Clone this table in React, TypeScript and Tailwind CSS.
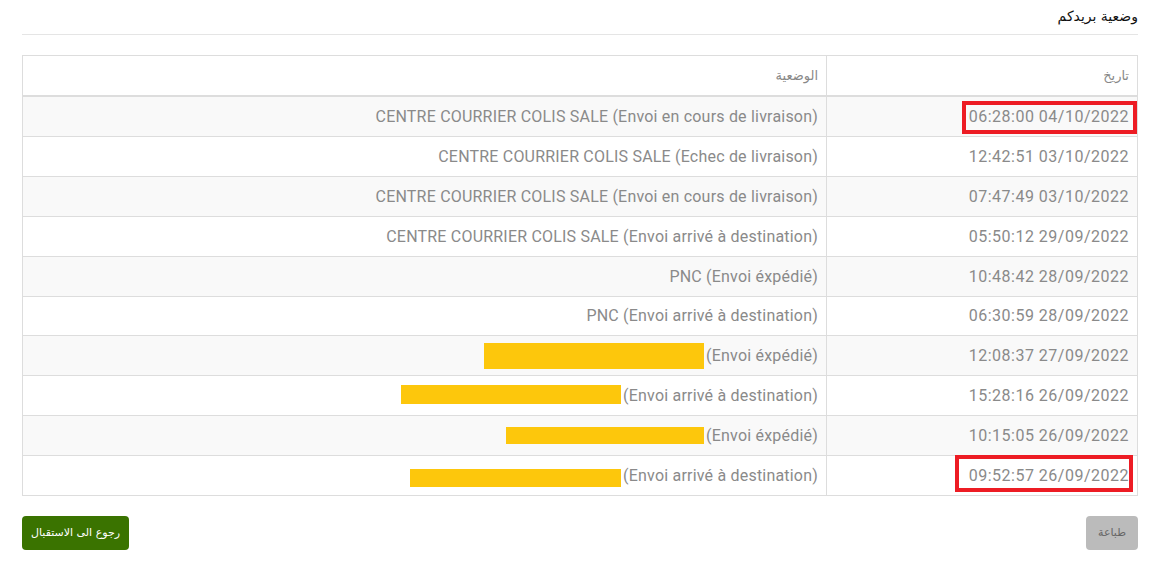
import React from "react";

type Row = {
  time: string;
  date: string;
  status: string;
  h?: number;
  bar?: { w: number; h: number; dy: number };
  mark?: { left: number; top: number; w: number; h: number };
};

const rows: Row[] = [
  { time: "06:28:00", date: "04/10/2022", status: "CENTRE COURRIER COLIS SALE (Envoi en cours de livraison)", mark: { left: 135, top: 4, w: 175, h: 33 } },
  { time: "12:42:51", date: "03/10/2022", status: "CENTRE COURRIER COLIS SALE (Echec de livraison)" },
  { time: "07:47:49", date: "03/10/2022", status: "CENTRE COURRIER COLIS SALE (Envoi en cours de livraison)" },
  { time: "05:50:12", date: "29/09/2022", status: "CENTRE COURRIER COLIS SALE (Envoi arrivé à destination)" },
  { time: "10:48:42", date: "28/09/2022", status: "PNC (Envoi éxpédié)" },
  { time: "06:30:59", date: "28/09/2022", status: "PNC (Envoi arrivé à destination)", h: 39 },
  { time: "12:08:37", date: "27/09/2022", status: "(Envoi éxpédié)", bar: { w: 220, h: 26, dy: 0 } },
  { time: "15:28:16", date: "26/09/2022", status: "(Envoi arrivé à destination)", bar: { w: 220, h: 19, dy: -1 } },
  { time: "10:15:05", date: "26/09/2022", status: "(Envoi éxpédié)", bar: { w: 198, h: 17, dy: 0 } },
  { time: "09:52:57", date: "26/09/2022", status: "(Envoi arrivé à destination)", h: 39, bar: { w: 211, h: 18, dy: 2 }, mark: { left: 128, top: -1, w: 178, h: 37 } },
];

const App = () => {
  return (
    <div className="min-h-[571px] bg-white pl-[22px] pr-[25px] font-['Roboto','Liberation_Sans','DejaVu_Sans',sans-serif]">
      <div className="flex h-[35px] justify-end border-b border-[#e5e5e5] pt-[5px]">
        <h2 className="text-[14px] leading-[22px] text-[#111] font-['DejaVu_Sans',sans-serif] font-normal" dir="rtl">
          وضعية بريدكم
        </h2>
      </div>

      <div className="mt-[20px] border border-[#ddd]">
        <div className="flex h-[41px] border-b-2 border-[#ddd] text-[13px] text-[#888] font-['DejaVu_Sans',sans-serif]">
          <div className="flex w-[804px] items-center justify-end border-r border-[#ddd] pr-[8px]">
            <span dir="rtl">الوضعية</span>
          </div>
          <div className="flex flex-1 items-center justify-end pr-[8px]">
            <span dir="rtl">تاريخ</span>
          </div>
        </div>
        {rows.map((r, i) => (
          <div
            key={i}
            className={
              "flex text-[16px] text-[#8a8a8a] " +
              (i < rows.length - 1 ? "border-b border-[#ddd] " : "") +
              (i % 2 === 0 ? "bg-[#f9f9f9]" : "bg-white")
            }
            style={{ height: r.h ?? 40 }}
          >
            <div className="flex w-[804px] items-center justify-end border-r border-[#ddd] pr-[8px]">
              {r.bar && (
                <span
                  className="mr-[2px] inline-block bg-[#fdc70c]"
                  style={{ width: r.bar.w, height: r.bar.h, marginTop: r.bar.dy * 2 }}
                />
              )}
              <span className="whitespace-nowrap tracking-[0.2px]">{r.status}</span>
            </div>
            <div className="relative flex flex-1 items-center justify-end pr-[8px]">
              <span className="whitespace-nowrap tracking-[0.5px]">
                {r.time} {r.date}
              </span>
              {r.mark && (
                <div
                  className="absolute border-[4px] border-[#ed1c24]"
                  style={{ left: r.mark.left, top: r.mark.top, width: r.mark.w, height: r.mark.h }}
                />
              )}
            </div>
          </div>
        ))}
      </div>

      <div className="mt-[20px] flex items-center justify-between">
        <button className="h-[34px] w-[107px] rounded-[4px] bg-[#3a7300] text-[11px] text-white font-['DejaVu_Sans',sans-serif]">
          رجوع الى الاستقبال
        </button>
        <button className="h-[34px] w-[52px] rounded-[4px] bg-[#bbbbbb] text-[11px] text-[#666] font-['DejaVu_Sans',sans-serif]">
          طباعة
        </button>
      </div>
    </div>
  );
};

export default App;
